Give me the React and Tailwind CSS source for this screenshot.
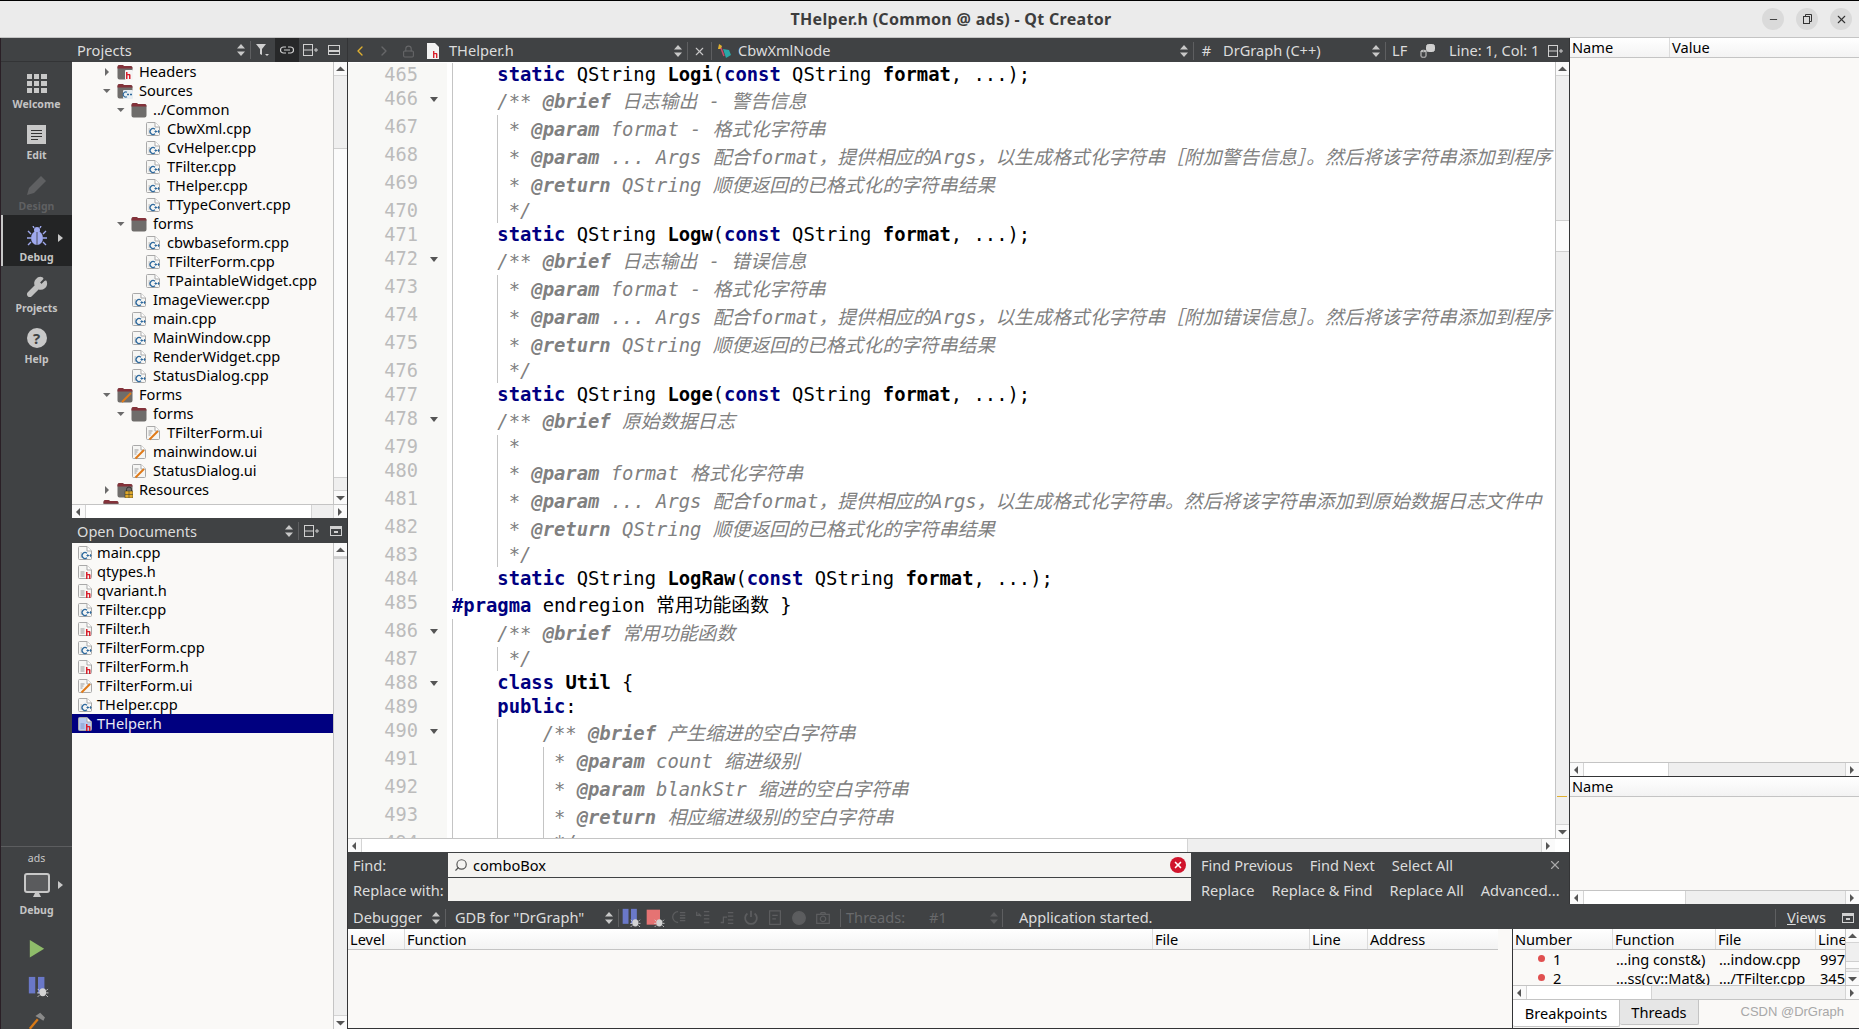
import React from 'react';
import { Wrench, Search, X, Minus, ChevronLeft, ChevronRight, Lock } from 'lucide-react';

const TreeArrow = ({ open }) => (
  <svg width="8" height="8" viewBox="0 0 8 8" className="block">
    {open ? <path d="M0 2h7.5L3.75 6z" fill="#6b6b6b" /> : <path d="M2 0v8l4-4z" fill="#6b6b6b" />}
  </svg>
);

const UpDown = ({ color = '#c8c8c8' }) => (
  <svg width="8" height="12" viewBox="0 0 8 12" className="block">
    <path d="M4 0l4 4.5H0zM4 12l4-4.5H0z" fill={color} />
  </svg>
);

const SmallArrow = ({ dir }) => {
  const d = { up: 'M0 6l4.5-4.5L9 6z', down: 'M0 2l4.5 4.5L9 2z', left: 'M6 0L2 4l4 4z', right: 'M2 0l4 4-4 4z' }[dir];
  return (
    <svg width="9" height="8" viewBox="0 0 9 8" className="block">
      <path d={d} fill="#555" />
    </svg>
  );
};

const VScroll = ({ before, thumb }) => (
  <div className="w-[14px] shrink-0 h-full flex flex-col bg-[#efefef] border-l border-[#c4c4c4]">
    <div className="h-[14px] shrink-0 bg-[#fafafa] border-b border-[#d4d4d4] flex items-center justify-center"><SmallArrow dir="up" /></div>
    <div className="shrink-0" style={{ height: before }} />
    <div className="shrink-0 bg-[#fbfbfb] border-y border-[#cfcfcf]" style={{ height: thumb }} />
    <div className="flex-1" />
    <div className="h-[14px] shrink-0 bg-[#fafafa] border-t border-[#d4d4d4] flex items-center justify-center"><SmallArrow dir="down" /></div>
  </div>
);

const HScroll = ({ thumb, width }) => (
  <div className="h-[14px] shrink-0 flex bg-[#efefef] border-t border-[#c4c4c4]" style={{ width }}>
    <div className="w-[14px] shrink-0 bg-[#fafafa] border-r border-[#d4d4d4] flex items-center justify-center"><SmallArrow dir="left" /></div>
    <div className="shrink-0 bg-white border-r border-[#d4d4d4]" style={{ width: thumb }} />
    <div className="flex-1" />
    <div className="w-[14px] shrink-0 bg-[#fafafa] border-l border-[#d4d4d4] flex items-center justify-center"><SmallArrow dir="right" /></div>
  </div>
);

const Page = ({ fill = '#f6f6f4', children }) => (
  <svg width="16" height="16" viewBox="0 0 16 16" className="block shrink-0">
    <path d="M1.5 2.5a1 1 0 0 1 1-1h7.5l4.5 4.5v7.5a1 1 0 0 1-1 1h-11a1 1 0 0 1-1-1z" fill={fill} stroke="#a9a9a9" />
    <path d="M10 1.5V6h4.5" fill="#fff" stroke="#a9a9a9" />
    {children}
  </svg>
);

const Aitch = () => (
  <g fill="#d8202c">
    <rect x="9" y="8" width="1.5" height="7" />
    <rect x="10" y="10" width="3" height="1.3" />
    <rect x="12" y="10.5" width="1.5" height="4.5" />
  </g>
);

const FileIcon = ({ type, selected }) => {
  if (type === 'cpp') {
    return (
      <Page>
        <path d="M3.5 8h1.5M3.5 10h1M3.5 12h1.5" stroke="#aaa" />
        <path d="M10 8.2a3 3 0 1 0 0 4.6" fill="none" stroke="#2f6a9e" strokeWidth="1.3" />
        <path d="M9.5 10.5h2.5M10.75 9.2v2.6M12.5 10.5h2M13.5 9.2v2.6" stroke="#2f6a9e" />
      </Page>
    );
  }
  if (type === 'h') {
    return (
      <Page fill={selected ? '#b8cbf0' : '#f6f6f4'}>
        <path d="M3.5 8h4M3.5 10h4M3.5 12h4" stroke={selected ? '#7f95c8' : '#999'} />
        <Aitch />
      </Page>
    );
  }
  return (
    <Page>
      <path d="M3.5 6h4M3.5 8h3M3.5 10h2" stroke="#999" />
      <path d="M4.5 14.5L13 6" stroke="#e07a18" strokeWidth="2" />
    </Page>
  );
};

const Folder = ({ badge }) => (
  <svg width="16" height="16" viewBox="0 0 16 16" className="block shrink-0">
    <path d="M0.5 3a2 2 0 0 1 2-2h3l1.5 1h6.5a2 2 0 0 1 2 2v9.5a2 2 0 0 1-2 2h-11a2 2 0 0 1-2-2z" fill="#6f6d6b" />
    <path d="M0.5 3a2 2 0 0 1 2-2h3l1.5 1h6.5a2 2 0 0 1 2 2v.5h-15z" fill="#84323a" />
    {badge === 'h' && <><rect x="8" y="6" width="8" height="10" fill="#f4f4f4" rx="1" /><Aitch /></>}
    {badge === 'cpp' && (
      <>
        <rect x="6" y="7" width="10" height="9" fill="#e8eef2" rx="1" />
        <path d="M10 9.2a2.6 2.6 0 1 0 0 4.6" fill="none" stroke="#2f6a9e" strokeWidth="1.2" />
        <path d="M10 11.5h2M11 10.5v2M13 11.5h2M14 10.5v2" stroke="#2f6a9e" />
      </>
    )}
    {badge === 'ui' && <path d="M5 15L14 6" stroke="#e07a18" strokeWidth="2" />}
    {badge === 'lock' && (
      <>
        <rect x="8" y="9" width="8" height="7" fill="#e0a92c" stroke="#443" strokeWidth="0.6" />
        <path d="M9.5 9V7.5a2.5 2.5 0 0 1 5 0V9" fill="none" stroke="#333" />
        <path d="M8 12.5h8M12 9v7" stroke="#443" strokeWidth="0.6" />
      </>
    )}
  </svg>
);

const tree = [
  [0, 'closed', 'h', 'Headers'],
  [0, 'open', 'cpp', 'Sources'],
  [1, 'open', '', '../Common'],
  [2, '', 'cpp', 'CbwXml.cpp'],
  [2, '', 'cpp', 'CvHelper.cpp'],
  [2, '', 'cpp', 'TFilter.cpp'],
  [2, '', 'cpp', 'THelper.cpp'],
  [2, '', 'cpp', 'TTypeConvert.cpp'],
  [1, 'open', '', 'forms'],
  [2, '', 'cpp', 'cbwbaseform.cpp'],
  [2, '', 'cpp', 'TFilterForm.cpp'],
  [2, '', 'cpp', 'TPaintableWidget.cpp'],
  [1, '', 'cpp', 'ImageViewer.cpp'],
  [1, '', 'cpp', 'main.cpp'],
  [1, '', 'cpp', 'MainWindow.cpp'],
  [1, '', 'cpp', 'RenderWidget.cpp'],
  [1, '', 'cpp', 'StatusDialog.cpp'],
  [0, 'open', 'ui', 'Forms'],
  [1, 'open', '', 'forms'],
  [2, '', 'ui', 'TFilterForm.ui'],
  [1, '', 'ui', 'mainwindow.ui'],
  [1, '', 'ui', 'StatusDialog.ui'],
  [0, 'closed', 'lock', 'Resources'],
];

const indents = ['pl-[31px]', 'pl-[45px]', 'pl-[59px]'];

const docs = [
  ['cpp', 'main.cpp'],
  ['h', 'qtypes.h'],
  ['h', 'qvariant.h'],
  ['cpp', 'TFilter.cpp'],
  ['h', 'TFilter.h'],
  ['cpp', 'TFilterForm.cpp'],
  ['h', 'TFilterForm.h'],
  ['ui', 'TFilterForm.ui'],
  ['cpp', 'THelper.cpp'],
  ['h', 'THelper.h'],
];

const TreeRow = ({ row }) => {
  const [level, arrow, icon, name] = row;
  return (
    <div className={`h-[19px] flex items-center whitespace-nowrap ${indents[level]}`}>
      <div className="w-[14px] shrink-0">{arrow && <TreeArrow open={arrow === 'open'} />}</div>
      {arrow ? <Folder badge={icon} /> : <FileIcon type={icon} />}
      <span className="ml-[6px]">{name}</span>
    </div>
  );
};

const styles = {
  kw: 'font-bold text-[#000080]',
  fn: 'font-bold text-black',
  p: 'text-black',
  c: 'italic text-[#808080]',
  tag: 'italic font-bold text-[#808080]',
};

const decl = (name) => [['p', '    '], ['kw', 'static'], ['p', ' QString '], ['fn', name], ['p', '('], ['kw', 'const'], ['p', ' QString '], ['fn', 'format'], ['p', ', ...);']];
const brief = (text, pad = '    ') => [['c', pad + '/** '], ['tag', '@brief'], ['c', ' ' + text]];
const param = (text, tag = '@param', pad = '     ') => [['c', pad + '* '], ['tag', tag], ['c', ' ' + text]];
const end = (pad = '     ') => [['c', pad + '*/']];

// [line, tall, fold, guides, parts]
const code = [
  [465, 0, 0, [], decl('Logi')],
  [466, 1, 1, [], brief('日志输出 - 警告信息')],
  [467, 1, 0, [4], param('format - 格式化字符串')],
  [468, 1, 0, [4], param('... Args 配合format，提供相应的Args，以生成格式化字符串［附加警告信息］。然后将该字符串添加到程序')],
  [469, 1, 0, [4], param('QString 顺便返回的已格式化的字符串结果', '@return')],
  [470, 0, 0, [4], end()],
  [471, 0, 0, [], decl('Logw')],
  [472, 1, 1, [], brief('日志输出 - 错误信息')],
  [473, 1, 0, [4], param('format - 格式化字符串')],
  [474, 1, 0, [4], param('... Args 配合format，提供相应的Args，以生成格式化字符串［附加错误信息］。然后将该字符串添加到程序')],
  [475, 1, 0, [4], param('QString 顺便返回的已格式化的字符串结果', '@return')],
  [476, 0, 0, [4], end()],
  [477, 0, 0, [], decl('Loge')],
  [478, 1, 1, [], brief('原始数据日志')],
  [479, 0, 0, [4], [['c', '     *']]],
  [480, 1, 0, [4], param('format 格式化字符串')],
  [481, 1, 0, [4], param('... Args 配合format，提供相应的Args，以生成格式化字符串。然后将该字符串添加到原始数据日志文件中')],
  [482, 1, 0, [4], param('QString 顺便返回的已格式化的字符串结果', '@return')],
  [483, 0, 0, [4], end()],
  [484, 0, 0, [], decl('LogRaw')],
  [485, 1, 0, null, [['kw', '#pragma'], ['p', ' endregion 常用功能函数 }']]],
  [486, 1, 1, [], brief('常用功能函数')],
  [487, 0, 0, [4], end()],
  [488, 0, 1, [], [['p', '    '], ['kw', 'class'], ['p', ' '], ['fn', 'Util'], ['p', ' {']]],
  [489, 0, 0, [], [['p', '    '], ['kw', 'public'], ['p', ':']]],
  [490, 1, 1, [4], brief('产生缩进的空白字符串', '        ')],
  [491, 1, 0, [4, 8], param('count 缩进级别', '@param', '         ')],
  [492, 1, 0, [4, 8], param('blankStr 缩进的空白字符串', '@param', '         ')],
  [493, 1, 0, [4, 8], param('相应缩进级别的空白字符串', '@return', '         ')],
  [494, 0, 0, [4, 8], end('         ')],
];

const guideLeft = { 4: 'left-[45px]', 8: 'left-[91px]' };

const CodeRow = ({ row }) => {
  const [line, tall, fold, guides, parts] = row;
  return (
    <div className={`flex shrink-0 ${tall ? 'h-[28px]' : 'h-[24px]'}`}>
      <div className="w-[99px] shrink-0 bg-[#f8f8f6] flex h-full">
        <div className="w-[70px] text-right leading-[24px] text-[#bcbcbc] text-[18.67px]">{line}</div>
        <div className="w-[29px] h-[24px] flex items-center justify-center pl-[2px]">
          {fold ? (
            <svg width="8" height="5" viewBox="0 0 8 5" className="block"><path d="M0 0h8L4 5z" fill="#555" /></svg>
          ) : null}
        </div>
      </div>
      <div className="w-[5px] shrink-0" />
      <div className={`relative flex-1 min-w-0 overflow-hidden whitespace-pre text-[18.84px] ${tall ? 'leading-[30px]' : 'leading-[24px]'}`}>
        {guides && <div className="absolute left-0 top-0 bottom-0 w-px bg-[#c4c4c4]" />}
        {guides && guides.map((g) => <div key={g} className={`absolute top-0 bottom-0 w-px bg-[#c4c4c4] ${guideLeft[g]}`} />)}
        {parts.map(([s, text], i) => <span key={i} className={styles[s]}>{text}</span>)}
      </div>
    </div>
  );
};

const Sep = () => <div className="w-px h-[18px] bg-[#5e5f61] shrink-0" />;

const SplitIcon = () => (
  <svg width="16" height="14" viewBox="0 0 16 14" className="block" fill="none" stroke="#d0d0d0">
    <rect x="0.5" y="1.5" width="9" height="11" />
    <path d="M0.5 7h9M11 7h4M13 5v4" />
  </svg>
);

const CloseBoxIcon = ({ up }) => (
  <svg width="12" height="12" viewBox="0 0 12 12" className="block">
    <rect x="0.5" y="1.5" width="11" height="9" fill="none" stroke="#d0d0d0" />
    <rect x="1" y={up ? 6 : 2} width="10" height="2" fill="#d0d0d0" />
    <rect x="4" y="6" width="4" height="2" fill="#d0d0d0" />
  </svg>
);

const Filter = () => (
  <svg width="14" height="12" viewBox="0 0 14 12" className="block">
    <path d="M0 0h10L6 5v6L4 10V5z" fill="#d0d0d0" />
    <path d="M9 10h4l-2 2z" fill="#d0d0d0" />
  </svg>
);

const LinkIcon = () => (
  <svg width="14" height="8" viewBox="0 0 14 8" className="block" fill="none" stroke="#d0d0d0" strokeWidth="1.2">
    <path d="M6 1H3.5a3 3 0 0 0 0 6H6M8 1h2.5a3 3 0 0 1 0 6H8M4 4h6" />
  </svg>
);

const RailItem = ({ icon, label, active, dim }) => (
  <div className={`h-[51px] flex flex-col items-center relative ${active ? 'bg-[#232425]' : ''}`}>
    {active && <div className="absolute left-0 top-0 bottom-0 w-[2px] bg-[#c8c8c8]" />}
    {active && <div className="absolute left-[57px] top-[19px]"><svg width="6" height="8" viewBox="0 0 6 8" className="block"><path d="M0 0l5 4-5 4z" fill="#c8c8c8" /></svg></div>}
    <div className="h-[24px] mt-[9px] flex items-center justify-center">{icon}</div>
    <div className={`text-[10.5px] font-bold leading-[14px] mt-[2px] ${dim ? 'text-[#5f6062]' : 'text-[#c4c4c4]'}`}>{label}</div>
  </div>
);

const GridIcon = () => (
  <div className="grid grid-cols-3 gap-[2px] w-[20px]">
    {[0, 1, 2, 3, 4, 5, 6, 7, 8].map((i) => <div key={i} className="h-[5px] bg-[#c8c8c8]" />)}
  </div>
);

const EditIcon = () => (
  <div className="w-[19px] h-[19px] bg-[#c8c8c8] flex flex-col gap-[2px] items-start pt-[5px] pl-[4px]">
    <div className="w-[11px] h-px bg-[#333]" />
    <div className="w-[11px] h-px bg-[#333]" />
    <div className="w-[11px] h-px bg-[#333]" />
    <div className="w-[7px] h-px bg-[#333]" />
  </div>
);

const PencilIcon = () => (
  <svg width="22" height="22" viewBox="0 0 22 22" className="block">
    <path d="M1 21l2-7L15 2l5 5L8 19z" fill="#5f6062" />
  </svg>
);

const Bug = ({ fill = '#9fa9ee', size = 20 }) => (
  <svg width={size} height={size} viewBox="0 0 20 20" className="block" stroke={fill} strokeWidth="1.4" fill="none">
    <ellipse cx="10" cy="12" rx="6" ry="7" fill={fill} stroke="none" />
    <circle cx="10" cy="4" r="3" fill={fill} stroke="none" />
    <path d="M10 6v13" stroke="#3a3b3d" strokeWidth="0.8" />
    <path d="M4 8L1 5M16 8l3-3M4 12H0M16 12h4M4 16l-3 3M16 16l3 3M7 2L6 0M13 2l1-2" />
  </svg>
);

const Monitor = () => (
  <svg width="26" height="25" viewBox="0 0 26 25" className="block">
    <rect x="1" y="1" width="24" height="18" rx="2" fill="#5a5b5d" stroke="#c8c8c8" strokeWidth="2" />
    <path d="M11 20h4l2 4H9z" fill="#c8c8c8" />
  </svg>
);

const RunDebug = ({ red, size = 24 }) => (
  <svg width={size} height={size} viewBox="0 0 24 24" className="block">
    {red ? (
      <rect x="2" y="2" width="16" height="18" fill="#e57373" />
    ) : (
      <>
        <rect x="2" y="1" width="7" height="18" fill="#6a78c8" />
        <rect x="12" y="1" width="7" height="18" fill="#6a78c8" />
      </>
    )}
    <g transform="translate(11 11) scale(0.62)">
      <ellipse cx="10" cy="11" rx="6" ry="7" fill="#d4d4d4" />
      <path d="M4 8L1 5M16 8l3-3M4 12H0M16 12h4M4 16l-3 3M16 16l3 3" stroke="#d4d4d4" strokeWidth="1.6" />
    </g>
  </svg>
);

const dimIcons = [
  <path key="a" d="M9 3a6 6 0 0 0 0 12M11 4h6M11 7h6M11 10h6M11 13h6" />,
  <path key="b" d="M3 3v4h4M5 5l3 3M11 3h6M11 7h6M11 11h6M11 15h6" />,
  <path key="c" d="M3 15h3V9h4M11 4h6M11 8h6M11 12h6M11 16h6" />,
  <path key="d" d="M10 2v7M6 5a6.5 6.5 0 1 0 8 0" strokeWidth="2" />,
  <path key="e" d="M4 2h12v15H4zM7 7h6M7 11h4" />,
  <circle key="f" cx="10" cy="10" r="7" fill="#5c5d5f" />,
  <path key="g" d="M3 6h14v10H3zM7 6l1-2h4l1 2M10 8a3 3 0 1 0 .01 0" />,
];

const Header = ({ label, className }) => (
  <div className={`h-full flex items-center whitespace-nowrap overflow-hidden border-r border-[#dcdcdc] pl-[2px] pt-px ${className}`}>{label}</div>
);

export default function App() {
  return (
    <div className="w-[1859px] h-[1029px] overflow-hidden flex flex-col bg-[#404244] text-[14.6px] text-black font-['Noto_Sans','Noto_Sans_CJK_SC',sans-serif]">
      {/* window title */}
      <div className="h-[38px] shrink-0 flex items-center bg-[#ebebeb] border-t border-black border-b border-b-[#c4c4c4] relative">
        <div className="flex-1 text-center font-bold text-[16px] tracking-[0.3px] text-[#3d3d3d] pl-[140px]">THelper.h (Common @ ads) - Qt Creator</div>
        <div className="flex gap-[12px] pr-[7px]">
          <div className="w-[22px] h-[22px] rounded-full bg-[#dadada] flex items-center justify-center"><Minus size={11} color="#333" /></div>
          <div className="w-[22px] h-[22px] rounded-full bg-[#dadada] flex items-center justify-center">
            <svg width="9" height="10" viewBox="0 0 9 10" fill="none" stroke="#333"><rect x="0.5" y="2.5" width="6" height="7" /><path d="M2.5 2V0.5h6v7H7" /></svg>
          </div>
          <div className="w-[22px] h-[22px] rounded-full bg-[#dadada] flex items-center justify-center"><X size={13} color="#333" /></div>
        </div>
      </div>

      <div className="flex-1 min-h-0 flex">
        {/* mode rail */}
        <div className="w-[72px] shrink-0 flex flex-col border-l border-[#2a1f26] overflow-hidden">
          <div className="h-[24px] shrink-0 border-b border-[#333436]" />
          <RailItem icon={<GridIcon />} label="Welcome" />
          <RailItem icon={<EditIcon />} label="Edit" />
          <RailItem icon={<PencilIcon />} label="Design" dim />
          <RailItem icon={<Bug />} label="Debug" active />
          <RailItem icon={<Wrench size={22} color="#c0c0c0" fill="#c0c0c0" />} label="Projects" />
          <RailItem
            icon={<div className="w-[20px] h-[20px] rounded-full bg-[#c8c8c8] text-[#404244] text-[15px] font-bold leading-[20px] text-center">?</div>}
            label="Help"
          />
          <div className="flex-1" />
          <div className="border-t border-[#5c5d5f] h-[183px] shrink-0 flex flex-col items-center">
            <div className="text-[10.5px] text-[#c8c8c8] mt-[4px] leading-[14px]">ads</div>
            <div className="relative mt-[8px] w-full flex justify-center">
              <Monitor />
              <div className="absolute left-[57px] top-[8px]"><svg width="6" height="8" viewBox="0 0 6 8" className="block"><path d="M0 0l5 4-5 4z" fill="#c8c8c8" /></svg></div>
            </div>
            <div className="text-[10.5px] font-bold text-[#c4c4c4] mt-[5px] leading-[14px]">Debug</div>
            <svg width="18" height="22" viewBox="0 0 18 22" className="block mt-[23px]"><path d="M0 0l18 11L0 22z" fill="#8fbc6a" /></svg>
            <div className="mt-[18px] ml-[2px]"><RunDebug size={22} /></div>
            <svg width="22" height="22" viewBox="0 0 22 22" className="block mt-[14px]">
              <path d="M2 21L12 9" stroke="#d97a16" strokeWidth="3" />
              <path d="M9 5l6-4 6 6-2 4-5-3z" fill="#8a8a8a" />
            </svg>
          </div>
        </div>

        {/* side bar */}
        <div className="w-[276px] shrink-0 flex flex-col border-r border-[#333436]">
          <div className="h-[24px] shrink-0 flex items-center text-[#dcdcdc]">
            <div className="w-[160px] pl-[5px] pt-[2px]">Projects</div>
            <div className="w-[18px] flex justify-center"><UpDown /></div>
            <Sep />
            <div className="w-[24px] flex justify-center"><Filter /></div>
            <div className="w-[24px] h-full bg-[#272829] flex items-center justify-center"><LinkIcon /></div>
            <div className="w-[24px] flex justify-center"><SplitIcon /></div>
            <div className="w-[22px] flex justify-center"><CloseBoxIcon up /></div>
          </div>
          <div className="h-[442px] shrink-0 flex bg-[#faf9f7]">
            <div className="flex-1 min-w-0 overflow-hidden">
              {tree.map((row, i) => <TreeRow key={i} row={row} />)}
              <div className="pl-[31px]"><Folder /></div>
            </div>
            <VScroll before={72} thumb={330} />
          </div>
          <HScroll width="275px" thumb={226} />
          <div className="h-[25px] shrink-0 flex items-center text-[#dcdcdc] bg-[#404244]">
            <div className="w-[208px] pl-[5px] pt-[2px]">Open Documents</div>
            <div className="w-[18px] flex justify-center"><UpDown /></div>
            <Sep />
            <div className="w-[26px] flex justify-center"><SplitIcon /></div>
            <div className="w-[22px] flex justify-center"><CloseBoxIcon /></div>
          </div>
          <div className="flex-1 min-h-0 flex bg-[#faf9f7]">
            <div className="flex-1 min-w-0">
              {docs.map(([type, name]) => (
                <div key={name} className={`h-[19px] flex items-center pl-[5px] ${name === 'THelper.h' ? 'bg-[#000080] text-[#e8e8f4]' : ''}`}>
                  <FileIcon type={type} selected={name === 'THelper.h'} />
                  <span className="ml-[4px]">{name}</span>
                </div>
              ))}
            </div>
            <VScroll before={0} thumb={0} />
          </div>
        </div>

        {/* editor + debugger */}
        <div className="flex-1 min-w-0 flex flex-col">
          <div className="h-[866px] shrink-0 flex">
            <div className="w-[1221px] shrink-0 flex flex-col">
              {/* editor toolbar */}
              <div className="h-[24px] shrink-0 pt-[2px] flex items-center text-[#dcdcdc] whitespace-nowrap">
                <div className="w-[24px] flex justify-center"><ChevronLeft size={16} color="#e0b030" /></div>
                <div className="w-[24px] flex justify-center"><ChevronRight size={16} color="#666769" /></div>
                <div className="w-[25px] flex justify-center"><Lock size={13} color="#666769" /></div>
                <div className="w-[23px] flex justify-center">
                  <svg width="12" height="16" viewBox="0 0 12 16" className="block"><path d="M0 0h8l4 4v12H0z" fill="#f2f2f2" /><rect x="6" y="8" width="1.4" height="7" fill="#d8202c" /><rect x="7" y="10" width="3" height="1.2" fill="#d8202c" /><rect x="9" y="10.5" width="1.4" height="4.5" fill="#d8202c" /></svg>
                </div>
                <div className="w-[224px] pl-[5px]">THelper.h</div>
                <div className="w-[19px] flex justify-center"><UpDown /></div>
                <Sep />
                <div className="w-[23px] flex justify-center"><X size={13} color="#c8c8c8" /></div>
                <Sep />
                <div className="w-[26px] flex justify-center">
                  <svg width="16" height="16" viewBox="0 0 16 16" className="block">
                    <path d="M2 1l3 2-1 3H1z" fill="#e0b030" /><path d="M6 6l6 1 2 5-5 3z" fill="#2aa6a6" /><path d="M4 5l3 8" stroke="#c84a6a" strokeWidth="1.5" />
                  </svg>
                </div>
                <div className="w-[437px]">CbwXmlNode</div>
                <div className="w-[18px] flex justify-center"><UpDown /></div>
                <Sep />
                <div className="w-[25px] text-center">#</div>
                <div className="w-[148px] pl-[4px]">DrGraph (C++)</div>
                <div className="w-[18px] flex justify-center"><UpDown /></div>
                <Sep />
                <div className="w-[30px] pl-[6px]">LF</div>
                <div className="w-[24px] flex justify-center">
                  <svg width="16" height="14" viewBox="0 0 16 14" fill="none" stroke="#d0d0d0" className="block"><path d="M1 7v5.5c0 1 5 1 5 0V7c0-1-5-1-5 0c0 1 5 1 5 0" /><rect x="6.5" y="0.5" width="8" height="7" rx="2" fill="#d0d0d0" /></svg>
                </div>
                <div className="w-[104px] pl-[9px]">Line: 1, Col: 1</div>
                <div className="w-[24px] flex justify-center"><SplitIcon /></div>
              </div>

              {/* code */}
              <div className="h-[776px] shrink-0 flex bg-white">
                <div className="flex-1 min-w-0 overflow-hidden pt-px font-['DejaVu_Sans_Mono','Noto_Sans_CJK_SC',monospace]">
                  {code.map((row) => <CodeRow key={row[0]} row={row} />)}
                </div>
                <div className="relative h-full shrink-0">
                  <VScroll before={144} thumb={32} />
                  <div className="absolute left-[2px] top-[734px] w-[10px] h-px bg-[#e0b030]" />
                </div>
              </div>
              <div className="flex bg-white"><HScroll width="1207px" thumb={826} /><div className="w-[14px] border-t border-[#c4c4c4]" /></div>

              {/* find bar */}
              <div className="h-[52px] shrink-0 flex flex-col text-[#dcdcdc] whitespace-nowrap">
                <div className="h-[25px] pt-px flex items-center">
                  <div className="w-[100px] pl-[5px] pt-[2px]">Find:</div>
                  <div className="w-[743px] h-[24px] bg-[#f4f3f1] flex items-center pl-[6px] pr-[5px] text-black">
                    <Search size={14} color="#555" className="-scale-x-100" />
                    <span className="ml-[5px] flex-1 pt-[2px]">comboBox</span>
                    <div className="w-[16px] h-[16px] rounded-full bg-[#d0142c] flex items-center justify-center"><X size={10} color="#fff" strokeWidth={4} /></div>
                  </div>
                  <div className="ml-[10px] pt-[2px] flex gap-[17px]">
                    <span>Find Previous</span><span>Find Next</span><span>Select All</span>
                  </div>
                  <div className="flex-1 flex justify-end pr-[7px]"><X size={14} color="#a8a8a8" /></div>
                </div>
                <div className="h-[24px] pt-px flex items-center">
                  <div className="w-[100px] pl-[5px] pt-[2px]">Replace with:</div>
                  <div className="w-[743px] h-[23px] bg-[#f4f3f1]" />
                  <div className="ml-[10px] pt-[2px] flex gap-[17px]">
                    <span>Replace</span><span>Replace &amp; Find</span><span>Replace All</span><span>Advanced...</span>
                  </div>
                </div>
              </div>
            </div>

            {/* watchers */}
            <div className="flex-1 min-w-0 flex flex-col bg-[#faf9f7] border-l border-[#333436] text-black">
              <div className="h-[20px] shrink-0 flex bg-gradient-to-b from-white to-[#f3f3f3] border-b border-[#c4c4c4]">
                <Header label="Name" className="w-[100px]" />
                <Header label="Value" className="flex-1 border-r-0" />
              </div>
              <div className="flex-1" />
              <HScroll width="100%" thumb={85} />
              <div className="h-px shrink-0 bg-[#333436]" />
              <div className="h-[20px] shrink-0 flex bg-gradient-to-b from-white to-[#f3f3f3] border-b border-[#c4c4c4]">
                <Header label="Name" className="flex-1 border-r-0" />
              </div>
              <div className="h-[93px] shrink-0" />
              <HScroll width="100%" thumb={102} />
            </div>
          </div>

          {/* debugger toolbar */}
          <div className="h-[25px] shrink-0 pt-[2px] flex items-center text-[#dcdcdc] whitespace-nowrap">
            <div className="w-[79px] pl-[5px]">Debugger</div>
            <div className="w-[18px] flex justify-center"><UpDown /></div>
            <Sep />
            <div className="w-[154px] pl-[9px]">GDB for "DrGraph"</div>
            <div className="w-[18px] flex justify-center"><UpDown /></div>
            <Sep />
            <div className="w-[24px] flex justify-center"><RunDebug size={20} /></div>
            <div className="w-[24px] flex justify-center"><RunDebug red size={20} /></div>
            {dimIcons.map((p, i) => (
              <div key={i} className="w-[24px] flex justify-center">
                <svg width="18" height="18" viewBox="0 0 20 20" fill="none" stroke="#5c5d5f" strokeWidth="1.4" className="block">{p}</svg>
              </div>
            ))}
            <div className="w-[5px]" />
            <Sep />
            <div className="w-[88px] pl-[5px] text-[#68696b]">Threads:</div>
            <div className="w-[56px] text-[#68696b]">#1</div>
            <div className="w-[17px] flex justify-center"><UpDown color="#5c5d5f" /></div>
            <Sep />
            <div className="flex-1 pl-[16px]">Application started.</div>
            <Sep />
            <div className="w-[60px] pl-[11px]"><span className="underline">V</span>iews</div>
            <div className="w-[23px] flex justify-center"><CloseBoxIcon /></div>
          </div>

          {/* debugger panes */}
          <div className="flex-1 min-h-0 flex border-b border-[#333436] text-black">
            <div className="w-[1165px] shrink-0 bg-[#faf9f7] border-r border-[#333436]">
              <div className="h-[21px] w-[1150px] flex bg-gradient-to-b from-white to-[#f3f3f3] border-b border-[#c4c4c4]">
                <Header label="Level" className="w-[57px]" />
                <Header label="Function" className="w-[748px]" />
                <Header label="File" className="w-[157px]" />
                <Header label="Line" className="w-[58px]" />
                <Header label="Address" className="flex-1 border-r-0" />
              </div>
            </div>
            <div className="flex-1 min-w-0 flex flex-col bg-[#faf9f7]">
              <div className="h-[56px] shrink-0 flex">
                <div className="flex-1 min-w-0 overflow-hidden">
                  <div className="h-[21px] flex bg-gradient-to-b from-white to-[#f3f3f3] border-b border-[#c4c4c4]">
                    <Header label="Number" className="w-[100px] shrink-0" />
                    <Header label="Function" className="w-[103px] shrink-0" />
                    <Header label="File" className="w-[100px] shrink-0" />
                    <Header label="Line" className="flex-1 border-r-0" />
                  </div>
                  {[['1', '…ing const&)', '…indow.cpp', '997'], ['2', '…ss(cv::Mat&)', '…/TFilter.cpp', '345']].map((r) => (
                    <div key={r[0]} className="h-[19px] flex items-center whitespace-nowrap">
                      <div className="w-[100px] shrink-0 flex items-center pl-[25px]">
                        <div className="w-[7px] h-[7px] rounded-full bg-[#e05050] mb-[2px]" />
                        <span className="ml-[8px]">{r[0]}</span>
                      </div>
                      <div className="w-[103px] shrink-0 pl-[3px] overflow-hidden">{r[1]}</div>
                      <div className="w-[100px] shrink-0 pl-[3px] overflow-hidden">{r[2]}</div>
                      <div className="pl-[4px]">{r[3]}</div>
                    </div>
                  ))}
                </div>
                <VScroll before={18} thumb={8} />
              </div>
              <HScroll width="100%" thumb={125} />
              <div className="flex-1 min-h-0 flex items-start bg-[#faf9f7] border-t border-[#c4c4c4] overflow-hidden">
                <div className="w-[107px] h-[27px] pt-[2px] shrink-0 bg-white border-r border-b border-[#c4c4c4] rounded-b-[2px] flex items-center justify-center">Breakpoints</div>
                <div className="w-[79px] h-[25px] pt-[2px] shrink-0 bg-[#e6e6e6] border-r border-b border-[#c4c4c4] rounded-b-[2px] flex items-center justify-center">Threads</div>
                <div className="flex-1 text-right pr-[15px] pt-[2px] text-[13px] text-[#a8a8a8] font-['Liberation_Sans',sans-serif] whitespace-nowrap">CSDN @DrGraph</div>
              </div>
            </div>
          </div>
        </div>
      </div>
    </div>
  );
}
